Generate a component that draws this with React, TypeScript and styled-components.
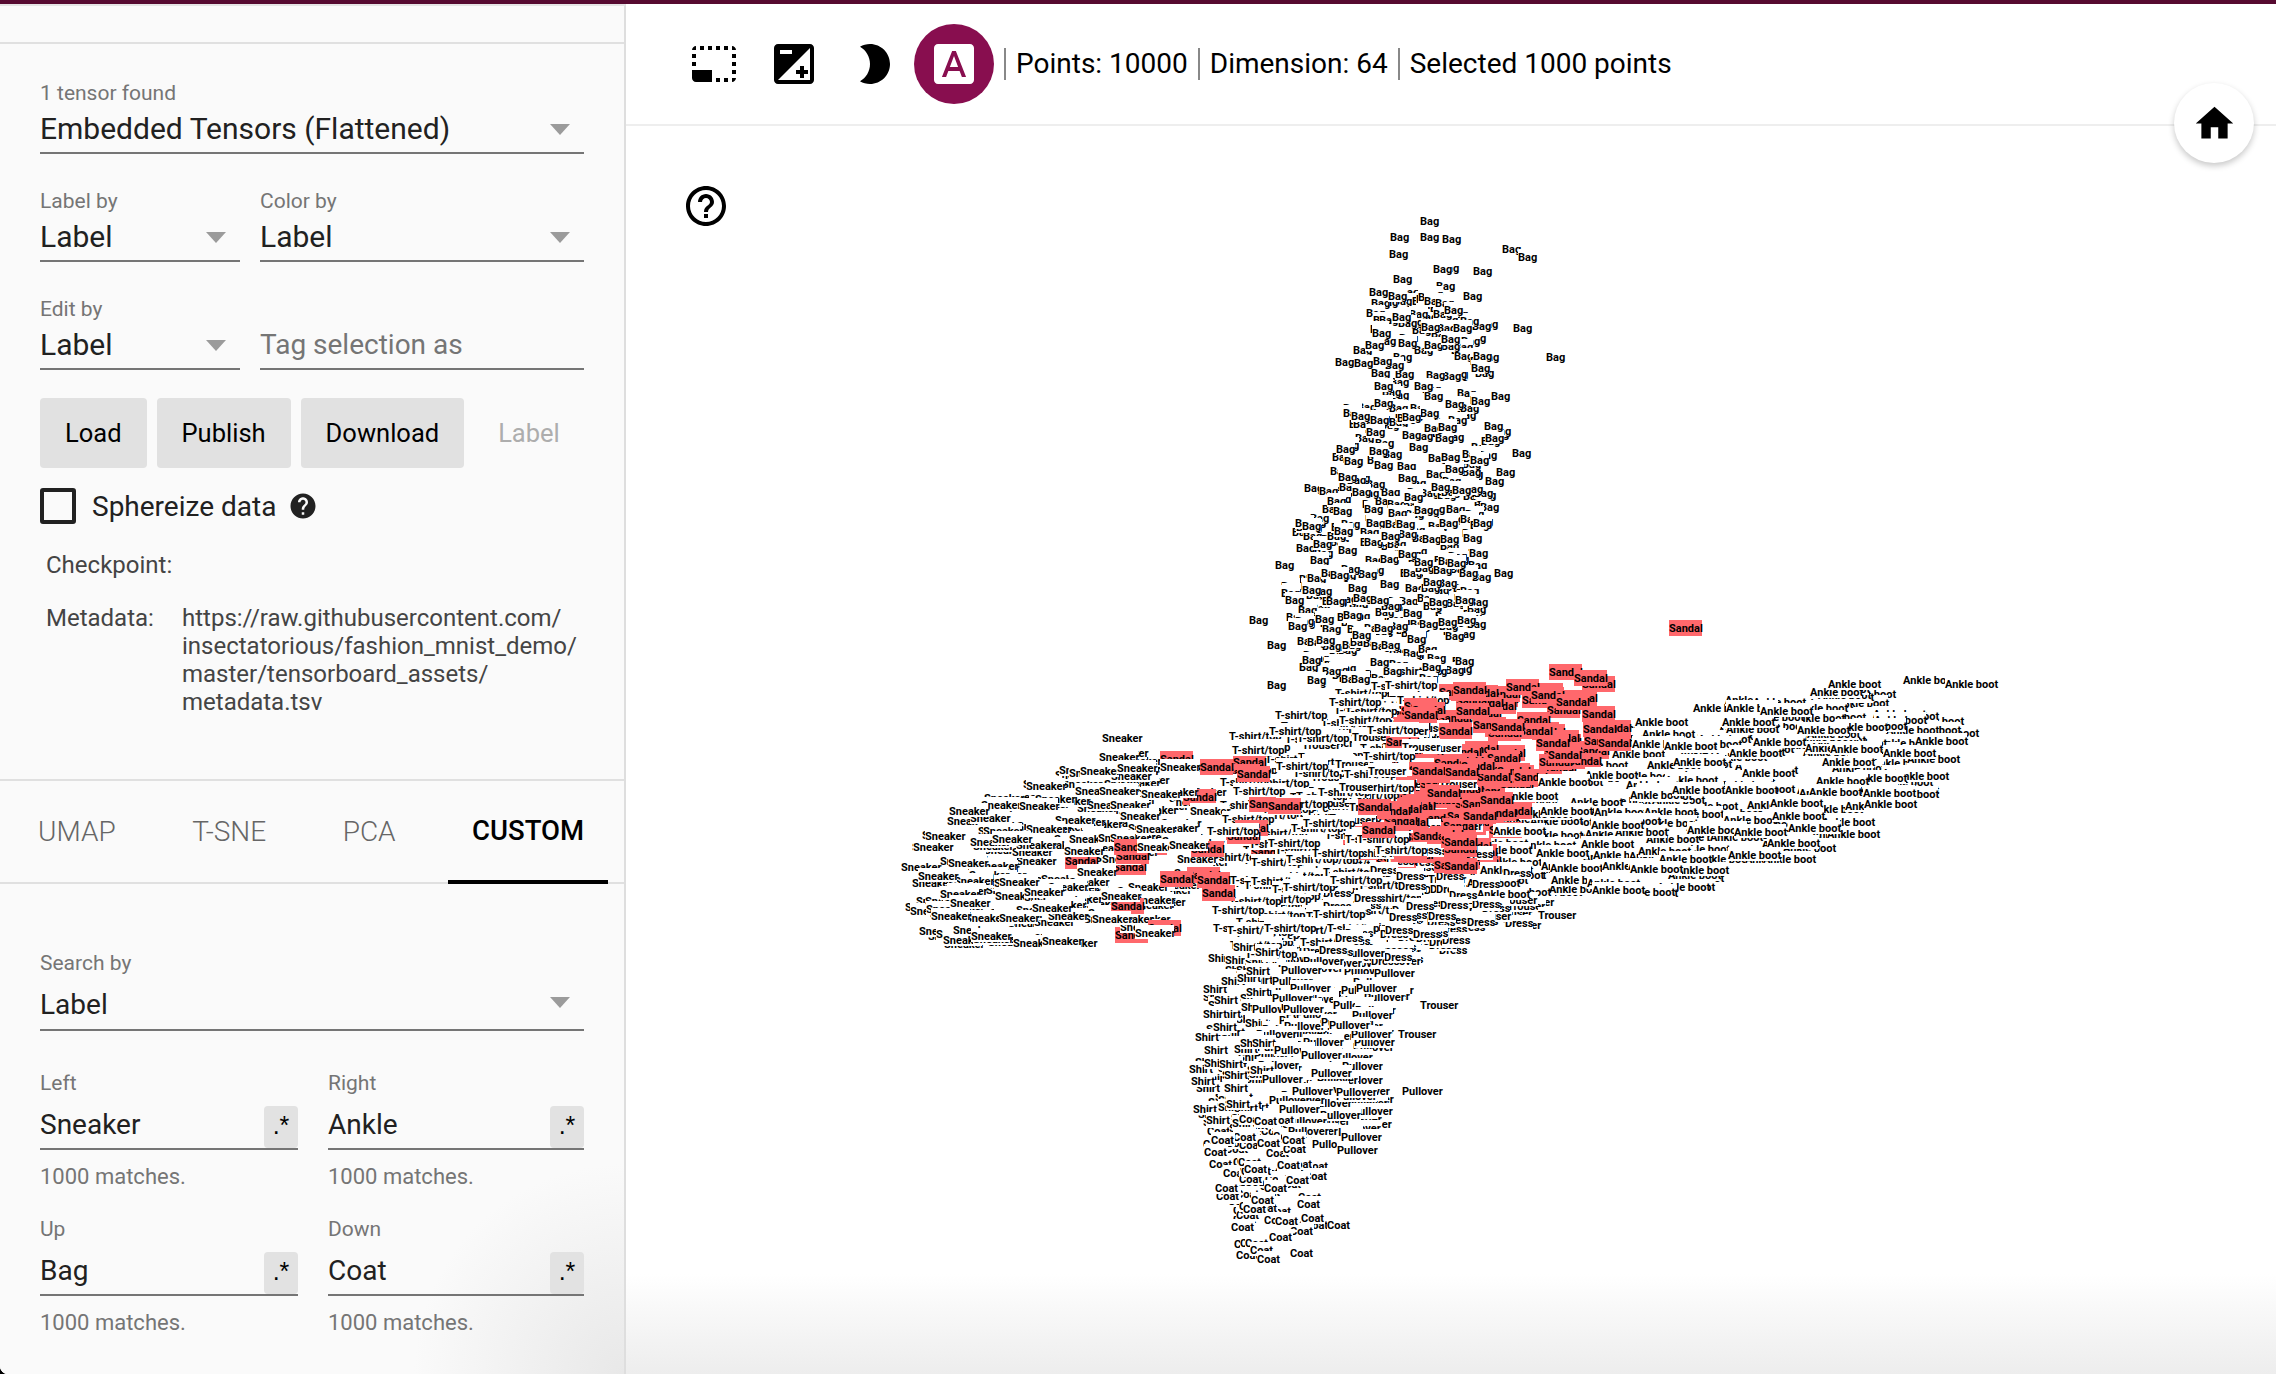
import styled, { createGlobalStyle } from 'styled-components';

const GlobalStyle = createGlobalStyle`
  html, body {
    margin: 0;
    height: 100%;
    background: #000;
    font-family: Roboto, "Liberation Sans", sans-serif;
  }
  * { box-sizing: border-box; }
`;

const Shell = styled.div`
  height: 1374px;
  width: 2276px;
  display: flex;
  flex-direction: column;
  overflow: hidden;
  border-bottom-left-radius: 8px;
  background: #fff;
`;

const TopBar = styled.div`
  height: 4px;
  flex: none;
  background: #560a30;
`;

const Body = styled.div`
  flex: 1;
  display: flex;
  min-height: 0;
`;

const Sidebar = styled.aside`
  width: 626px;
  flex: none;
  border-top: 2px solid #e4e4e4;
  border-right: 2px solid #dedede;
  background: radial-gradient(circle at 100% 100%, #e8e8e8 0, #fafafa 210px), #fafafa;
`;

const TopStrip = styled.div`
  height: 38px;
  border-bottom: 2px solid #e0e0e0;
`;

const Section = styled.div<{ $top: number }>`
  padding: ${({ $top }) => $top}px 40px 0;
`;

const TwoCols = styled.div<{ $cols: string; $gap: number; $top: number }>`
  display: grid;
  grid-template-columns: ${({ $cols }) => $cols};
  column-gap: ${({ $gap }) => $gap}px;
  margin-top: ${({ $top }) => $top}px;
`;

const FieldLabel = styled.div`
  font-size: 21px;
  line-height: 24px;
  color: #757575;
`;

const FieldBox = styled.div<{ $height: number; $pad?: number; $size?: number }>`
  position: relative;
  height: ${({ $height }) => $height + 2}px;
  padding-top: ${({ $pad }) => $pad ?? 0}px;
  border-bottom: 2px solid #757575;
  display: flex;
  align-items: center;
  font-size: ${({ $size }) => $size ?? 28}px;
  color: #212121;
`;

const Placeholder = styled.span`
  color: #757575;
`;

const Caret = styled.span`
  position: absolute;
  right: 14px;
  top: 50%;
  margin-top: -5px;
  border-left: 10px solid transparent;
  border-right: 10px solid transparent;
  border-top: 11px solid #9b9b9b;
`;

const RegexButton = styled.div`
  position: absolute;
  right: 0;
  bottom: 0;
  width: 34px;
  height: 42px;
  border-radius: 4px;
  background: #e2e2e2;
  color: #000;
  font-family: "Liberation Sans", sans-serif;
  font-size: 25px;
  line-height: 38px;
  text-align: center;
`;

const Matches = styled.div`
  margin-top: 15px;
  font-size: 22px;
  line-height: 24px;
  color: #757575;
`;

const Buttons = styled.div`
  display: flex;
  align-items: center;
  gap: 10px;
  margin-top: 28px;
`;

const Button = styled.div`
  height: 70px;
  padding: 0 25px;
  border-radius: 4px;
  background: #e1e1e1;
  font-size: 25.5px;
  line-height: 70px;
  color: #000;
`;

const GhostLabel = styled.span`
  margin-left: 24px;
  font-size: 25.5px;
  color: #adadad;
`;

const SphereRow = styled.div`
  display: flex;
  align-items: center;
  margin-top: 20px;
  font-size: 28px;
  color: #212121;
`;

const Checkbox = styled.span`
  width: 36px;
  height: 36px;
  margin-right: 16px;
  border: 4px solid #212121;
  border-radius: 3px;
`;

const HelpSmall = styled.svg`
  width: 30px;
  height: 30px;
  margin-left: 12px;
  fill: #212121;
`;

const MetaList = styled.div`
  display: grid;
  grid-template-columns: 136px 1fr;
  row-gap: 25px;
  margin-top: 27px;
  padding-left: 6px;
  font-size: 24px;
  line-height: 28px;
  color: #444;
`;

const MetaValue = styled.div`
  min-height: 28px;
  white-space: pre-line;
`;

const Tabs = styled.div`
  display: flex;
  gap: 28.5px;
  height: 105px;
  margin-top: 63px;
  padding-left: 14px;
  border-top: 2px solid #e0e0e0;
  border-bottom: 2px solid #e0e0e0;
`;

const Tab = styled.div<{ $active?: boolean }>`
  height: 103px;
  padding: 0 24px;
  border-bottom: 4px solid ${({ $active }) => ($active ? '#000' : 'transparent')};
  font-size: ${({ $active }) => ($active ? 27.5 : 28)}px;
  font-weight: ${({ $active }) => ($active ? 500 : 300)};
  line-height: ${({ $active }) => ($active ? 100 : 102)}px;
  color: ${({ $active }) => ($active ? '#000' : '#666')};
`;

const Main = styled.main`
  position: relative;
  flex: 1;
  display: flex;
  flex-direction: column;
  min-width: 0;
  background: linear-gradient(to bottom, #fff calc(100% - 100px), #ededed 100%);
`;

const Toolbar = styled.div`
  height: 122px;
  flex: none;
  display: flex;
  align-items: center;
  padding: 0 0 0 48px;
  border-bottom: 2px solid #eee;
  background: #fff;
`;

const IconButton = styled.div<{ $active?: boolean }>`
  width: 80px;
  height: 80px;
  display: flex;
  align-items: center;
  justify-content: center;
  border-radius: 50%;
  background: ${({ $active }) => ($active ? '#880e4f' : 'transparent')};
  color: ${({ $active }) => ($active ? '#fff' : '#000')};
`;

const Icon48 = styled.svg`
  width: 48px;
  height: 48px;
  fill: currentColor;
`;

const Stat = styled.div<{ $first?: boolean }>`
  margin-left: ${({ $first }) => ($first ? 10 : 0)}px;
  padding: 0 10px 0 10px;
  border-left: 2px solid #888;
  font-size: 28px;
  line-height: 32px;
  color: #000;
`;

const HomeButton = styled.div`
  position: absolute;
  top: 79px;
  right: 22px;
  width: 80px;
  height: 80px;
  display: flex;
  align-items: center;
  justify-content: center;
  border-radius: 50%;
  background: #fff;
  box-shadow: 0 3px 6px rgba(0, 0, 0, 0.22);
`;

const HomeIcon = styled.svg`
  width: 45px;
  height: 45px;
  fill: #000;
`;

const HelpButton = styled.svg`
  position: absolute;
  top: 178px;
  left: 56px;
  width: 48px;
  height: 48px;
  fill: #000;
`;

const Projection = styled.svg`
  flex: 1;
  width: 100%;
  min-height: 0;
`;

const PointBox = styled.rect<{ $selected: boolean }>`
  fill: ${({ $selected }) => ($selected ? '#ff686c' : '#fff')};
`;

const PointText = styled.text`
  font-family: Roboto, "Liberation Sans", sans-serif;
  font-size: 11px;
  font-weight: 700;
  fill: #000;
`;

const WIDTHS: Record<string, number> = {
  Bag: 19,
  Sandal: 33,
  Sneaker: 39,
  'T-shirt/top': 52,
  Trouser: 39,
  'Ankle boot': 52,
  Dress: 28,
  Shirt: 24,
  Pullover: 41,
  Coat: 24
};

type Pt = [number, number];

// outlines of each class, measured on the picture at 1568 wide
const CLUSTERS: { label: string; count: number; poly: Pt[] }[] = [
  { label: 'Bag', count: 45, poly: [[948, 200], [1010, 200], [1028, 240], [938, 245]] },
  { label: 'Bag', count: 120, poly: [[918, 340], [930, 285], [937, 245], [1028, 245], [1036, 300], [1030, 340]] },
  { label: 'Bag', count: 290, poly: [[905, 335], [1030, 335], [1020, 420], [1005, 470], [905, 470], [885, 410]] },
  { label: 'T-shirt/top', count: 170, poly: [[860, 500], [930, 480], [990, 450], [970, 560], [960, 640], [880, 660], [830, 650], [850, 560]] },
  { label: 'Sneaker', count: 230, poly: [[630, 590], [660, 560], [740, 530], [780, 515], [830, 530], [840, 590], [820, 620], [790, 650], [700, 650], [655, 655], [635, 625]] },
  { label: 'Ankle boot', count: 260, poly: [[1060, 540], [1130, 490], [1230, 480], [1290, 470], [1350, 505], [1320, 550], [1250, 590], [1150, 615], [1070, 620], [1010, 620], [1040, 570]] },
  { label: 'Trouser', count: 70, poly: [[900, 500], [1010, 490], [1020, 560], [1000, 600], [1060, 620], [1040, 640], [950, 590], [900, 560]] },
  { label: 'Dress', count: 130, poly: [[900, 625], [1000, 570], [1050, 600], [1030, 630], [990, 665], [900, 665]] },
  { label: 'Shirt', count: 90, poly: [[840, 650], [885, 650], [880, 720], [860, 780], [840, 780], [820, 750], [835, 700]] },
  { label: 'Pullover', count: 140, poly: [[880, 660], [970, 655], [950, 710], [950, 770], [930, 800], [900, 790], [870, 720]] },
  { label: 'Coat', count: 95, poly: [[835, 780], [880, 760], [905, 790], [915, 845], [890, 868], [860, 868], [840, 830]] },
  { label: 'Sandal', count: 130, poly: [[970, 480], [1095, 465], [1140, 510], [1060, 540], [1040, 580], [1000, 600], [930, 590], [950, 530]] },
  { label: 'Sandal', count: 55, poly: [[945, 535], [1045, 535], [1040, 590], [1000, 600], [935, 590]] },
  { label: 'Sandal', count: 24, poly: [[760, 590], [805, 520], [880, 515], [930, 520], [900, 560], [825, 640], [780, 645]] }
];

// stragglers that stand clear of the clusters, in reference pixels
const STRAGGLERS: [string, number, number][] = [
  ['Bag', 1420, 221], ['Bag', 1390, 237], ['Bag', 1420, 237], ['Bag', 1442, 239], ['Bag', 1389, 254],
  ['Bag', 1502, 249], ['Bag', 1518, 257], ['Bag', 1440, 268], ['Bag', 1433, 269], ['Bag', 1473, 271],
  ['Bag', 1393, 279], ['Bag', 1436, 286], ['Bag', 1463, 296], ['Bag', 1400, 292], ['Bag', 1379, 302],
  ['Bag', 1412, 301], ['Bag', 1437, 307], ['Bag', 1447, 308], ['Bag', 1442, 317], ['Bag', 1409, 314],
  ['Bag', 1379, 320], ['Bag', 1398, 323], ['Bag', 1463, 323], ['Bag', 1479, 324], ['Bag', 1513, 328],
  ['Bag', 1546, 357], ['Bag', 1431, 334], ['Bag', 1353, 350], ['Bag', 1335, 362], ['Bag', 1491, 396],
  ['Bag', 1462, 454], ['Bag', 1512, 453], ['Bag', 1496, 472], ['Bag', 1249, 620], ['Bag', 1267, 645],
  ['Bag', 1267, 685], ['Bag', 1275, 565], ['Bag', 1494, 573],
  ['Sandal', 1669, 628], ['Sandal', 1549, 672], ['Sandal', 1574, 678], ['Sandal', 1453, 690],
  ['Sandal', 1065, 861], ['Sandal', 1160, 759], ['Sandal', 1115, 935],
  ['Sneaker', 1102, 738], ['Sneaker', 1099, 757],
  ['Trouser', 1538, 915], ['Trouser', 1503, 925], ['Dress', 1505, 923], ['Trouser', 1420, 1005],
  ['Trouser', 1398, 1034], ['Pullover', 1402, 1091], ['Coat', 1327, 1225], ['Coat', 1250, 1250],
  ['Coat', 1290, 1253], ['Ankle boot', 1828, 684], ['Ankle boot', 1903, 680], ['Ankle boot', 1945, 684]
];

const mulberry = (seed: number) => () => {
  seed = (seed + 0x6d2b79f5) | 0;
  let t = Math.imul(seed ^ (seed >>> 15), 1 | seed);
  t = (t + Math.imul(t ^ (t >>> 7), 61 | t)) ^ t;
  return ((t ^ (t >>> 14)) >>> 0) / 4294967296;
};

const inside = ([x, y]: Pt, poly: Pt[]) => {
  let hit = false;
  for (let i = 0, j = poly.length - 1; i < poly.length; j = i++) {
    const [xi, yi] = poly[i];
    const [xj, yj] = poly[j];
    if (yi > y !== yj > y && x < ((xj - xi) * (y - yi)) / (yj - yi) + xi) hit = !hit;
  }
  return hit;
};

const buildPoints = () => {
  const rnd = mulberry(4711);
  const points: { label: string; x: number; y: number; order: number }[] = [];
  CLUSTERS.forEach(({ label, count, poly }) => {
    const xs = poly.map((p) => p[0]);
    const ys = poly.map((p) => p[1]);
    const [x0, x1] = [Math.min(...xs), Math.max(...xs)];
    const [y0, y1] = [Math.min(...ys), Math.max(...ys)];
    let made = 0;
    while (made < count) {
      const p: Pt = [x0 + rnd() * (x1 - x0), y0 + rnd() * (y1 - y0)];
      if (!inside(p, poly)) continue;
      points.push({
        label,
        x: Math.round(p[0] * 1.4515 - WIDTHS[label] / 2),
        y: Math.round(p[1] * 1.4515),
        // sandals mostly sit on top of the others
        order: label === 'Sandal' ? 0.35 + 0.65 * rnd() : rnd()
      });
      made++;
    }
  });
  STRAGGLERS.forEach(([label, x, y]) => points.push({ label, x, y, order: rnd() }));
  return points.sort((a, b) => a.order - b.order);
};

const POINTS = buildPoints();

const SelectField = ({
  label,
  value,
  height = 47,
  pad,
  size = 30
}: {
  label: string;
  value: string;
  height?: number;
  pad?: number;
  size?: number;
}) => (
  <div>
    <FieldLabel>{label}</FieldLabel>
    <FieldBox $height={height} $pad={pad} $size={size}>
      {value}
      <Caret />
    </FieldBox>
  </div>
);

const SearchField = ({ label, value }: { label: string; value: string }) => (
  <div>
    <FieldLabel>{label}</FieldLabel>
    <FieldBox $height={53} $pad={5}>
      {value}
      <RegexButton>.*</RegexButton>
    </FieldBox>
    <Matches>1000 matches.</Matches>
  </div>
);

export default function App() {
  return (
    <Shell>
      <GlobalStyle />
      <TopBar />
      <Body>
        <Sidebar>
          <TopStrip />
          <Section $top={37}>
            <SelectField label="1 tensor found" value="Embedded Tensors (Flattened)" />
            <TwoCols $cols="200px 1fr" $gap={20} $top={35}>
              <SelectField label="Label by" value="Label" />
              <SelectField label="Color by" value="Label" />
            </TwoCols>
            <TwoCols $cols="200px 1fr" $gap={20} $top={35}>
              <SelectField label="Edit by" value="Label" />
              <div>
                <FieldLabel>&nbsp;</FieldLabel>
                <FieldBox $height={47}>
                  <Placeholder>Tag selection as</Placeholder>
                </FieldBox>
              </div>
            </TwoCols>
            <Buttons>
              <Button>Load</Button>
              <Button>Publish</Button>
              <Button>Download</Button>
              <GhostLabel>Label</GhostLabel>
            </Buttons>
            <SphereRow>
              <Checkbox />
              Sphereize data
              <HelpSmall viewBox="0 0 24 24">
                <path d="M12 2C6.48 2 2 6.48 2 12s4.48 10 10 10 10-4.48 10-10S17.52 2 12 2zm1 17h-2v-2h2v2zm2.07-7.75l-.9.92C13.45 12.9 13 13.5 13 15h-2v-.5c0-1.1.45-2.1 1.17-2.83l1.24-1.26c.37-.36.59-.86.59-1.41 0-1.1-.9-2-2-2s-2 .9-2 2H8c0-2.21 1.79-4 4-4s4 1.79 4 4c0 .88-.36 1.68-.93 2.25z" />
              </HelpSmall>
            </SphereRow>
            <MetaList>
              <div>Checkpoint:</div>
              <MetaValue />
              <div>Metadata:</div>
              <MetaValue>
                {'https://raw.githubusercontent.com/\ninsectatorious/fashion_mnist_demo/\nmaster/tensorboard_assets/\nmetadata.tsv'}
              </MetaValue>
            </MetaList>
          </Section>
          <Tabs>
            <Tab>UMAP</Tab>
            <Tab>T-SNE</Tab>
            <Tab>PCA</Tab>
            <Tab $active>CUSTOM</Tab>
          </Tabs>
          <Section $top={67}>
            <SelectField label="Search by" value="Label" height={54} pad={4} size={28} />
            <TwoCols $cols="258px 256px" $gap={30} $top={40}>
              <SearchField label="Left" value="Sneaker" />
              <SearchField label="Right" value="Ankle" />
            </TwoCols>
            <TwoCols $cols="258px 256px" $gap={30} $top={28}>
              <SearchField label="Up" value="Bag" />
              <SearchField label="Down" value="Coat" />
            </TwoCols>
          </Section>
        </Sidebar>
        <Main>
          <Toolbar>
            <IconButton>
              <Icon48 viewBox="0 0 24 24">
                <path d="M23 15h-2v2h2v-2zm0-4h-2v2h2v-2zm0 8h-2v2c1 0 2-1 2-2zM15 3h-2v2h2V3zm8 4h-2v2h2V7zm-2-4v2h2c0-1-1-2-2-2zM3 21h8v-6H1v4c0 1.1.9 2 2 2zM3 7H1v2h2V7zm12 12h-2v2h2v-2zm4-16h-2v2h2V3zm0 16h-2v2h2v-2zM3 3C2 3 1 4 1 5h2V3zm0 8H1v2h2v-2zm8-8H9v2h2V3zM7 3H5v2h2V3z" />
              </Icon48>
            </IconButton>
            <IconButton>
              <Icon48 viewBox="0 0 24 24">
                <path d="M15 17v2h2v-2h2v-2h-2v-2h-2v2h-2v2h2zm5-15H4c-1.1 0-2 .9-2 2v16c0 1.1.9 2 2 2h16c1.1 0 2-.9 2-2V4c0-1.1-.9-2-2-2zM5 5h6v2H5V5zm15 15H4L20 4v16z" />
              </Icon48>
            </IconButton>
            <IconButton>
              <Icon48 viewBox="0 0 24 24">
                <path d="M10 2c-1.82 0-3.53.5-5 1.35C7.99 5.08 10 8.3 10 12s-2.01 6.92-5 8.65C6.47 21.5 8.18 22 10 22c5.52 0 10-4.48 10-10S15.52 2 10 2z" />
              </Icon48>
            </IconButton>
            <IconButton $active>
              <Icon48 viewBox="0 0 24 24">
                <path d="M9.93 13.5h4.14L12 7.98zM20 2H4c-1.1 0-2 .9-2 2v16c0 1.1.9 2 2 2h16c1.1 0 2-.9 2-2V4c0-1.1-.9-2-2-2zm-4.05 16.5l-1.14-3H9.17l-1.12 3H5.96l5.11-13h1.86l5.11 13h-2.09z" />
              </Icon48>
            </IconButton>
            <Stat $first>Points: 10000</Stat>
            <Stat>Dimension: 64</Stat>
            <Stat>Selected 1000 points</Stat>
          </Toolbar>
          <HomeButton>
            <HomeIcon viewBox="0 0 24 24">
              <path d="M10 20v-6h4v6h5v-8h3L12 3 2 12h3v8z" />
            </HomeIcon>
          </HomeButton>
          <HelpButton viewBox="0 0 24 24">
            <path d="M11 18h2v-2h-2v2zm1-16C6.48 2 2 6.48 2 12s4.48 10 10 10 10-4.48 10-10S17.52 2 12 2zm0 18c-4.41 0-8-3.59-8-8s3.59-8 8-8 8 3.59 8 8-3.59 8-8 8zm0-14c-2.21 0-4 1.79-4 4h2c0-1.1.9-2 2-2s2 .9 2 2c0 2-3 1.75-3 5h2c0-2.25 3-2.5 3-5 0-2.21-1.79-4-4-4z" />
          </HelpButton>
          <Projection viewBox="626 126 1650 1248">
            {POINTS.map((p, i) => (
              <g key={i}>
                <PointBox
                  $selected={p.label === 'Sandal'}
                  x={p.x}
                  y={p.y - 8}
                  width={WIDTHS[p.label]}
                  height={p.label === 'Sandal' ? 16 : 14}
                />
                <PointText x={p.x} y={p.y + 4}>
                  {p.label}
                </PointText>
              </g>
            ))}
          </Projection>
        </Main>
      </Body>
    </Shell>
  );
}
